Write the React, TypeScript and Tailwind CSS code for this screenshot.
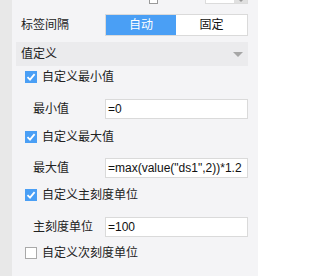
import React from 'react';

const Check: React.FC<{ checked?: boolean; label: string }> = ({ checked, label }) => (
  <div className="flex h-[22px] items-center pl-[13px]">
    {checked ? (
      <div className="flex h-[12px] w-[12px] items-center justify-center bg-[#4a9ff5]">
        <svg width="10" height="10" viewBox="0 0 10 10">
          <path d="M1.5 5.2 L4 7.6 L8.6 2.2" fill="none" stroke="#fff" strokeWidth="1.8" />
        </svg>
      </div>
    ) : (
      <div className="h-[12px] w-[12px] border border-[#a9a9a9] bg-white" />
    )}
    <span className="ml-[5px] text-[12px] leading-none text-[#222]">{label}</span>
  </div>
);

const Field: React.FC<{ label: string; value: string; className?: string }> = ({ label, value, className }) => (
  <div className={`flex h-[20px] items-center ${className ?? ''}`}>
    <span className="w-[93px] shrink-0 pl-[21px] text-[12px] text-[#222] whitespace-nowrap">{label}</span>
    <div className="flex h-[20px] w-[143px] items-center overflow-hidden border border-[#dadada] bg-white pl-[2px] text-[12px] text-[#111] whitespace-nowrap">
      {value}
    </div>
  </div>
);

export default function App() {
  return (
    <div
      className="flex h-[276px] w-[258px] overflow-hidden bg-[#f4f4f6]"
      style={{ fontFamily: '"Liberation Sans", "Noto Sans CJK SC", sans-serif' }}
    >
      <div className="w-[12px] shrink-0 bg-[#e8e8e8]" />
      <div className="flex w-[246px] flex-col">
        {/* clipped row from above */}
        <div className="flex h-[4px] items-end overflow-hidden">
          <div className="ml-[137px] h-[10px] w-[9px] border border-[#9a9a9a] bg-white" />
          <div className="ml-[47px] flex h-[12px] w-[43px] border border-[#dcdcdc] bg-white">
            <div className="ml-auto flex w-[13px] items-end justify-center bg-[#e0e0e0] pb-[1px]">
              <div className="h-0 w-0 border-x-[3px] border-t-[3px] border-x-transparent border-t-[#9a9a9a]" />
            </div>
          </div>
        </div>

        {/* 标签间隔 */}
        <div className="mt-[10px] flex h-[22px] items-center">
          <span className="w-[93px] pl-[9px] text-[12px] text-[#222]">标签间隔</span>
          <div className="flex h-[22px] w-[143px] border border-[#dadada] bg-white text-[12px]">
            <div className="flex w-[70px] items-center justify-center bg-[#4a9ff5] text-white">自动</div>
            <div className="flex flex-1 items-center justify-center text-[#111]">固定</div>
          </div>
        </div>

        {/* 值定义 */}
        <div className="ml-[4px] mt-[6px] flex h-[24px] w-[232px] items-center justify-between bg-[#ebebed] pl-[5px] pr-[5px]">
          <span className="text-[12px] text-[#222]">值定义</span>
          <div className="h-0 w-0 border-x-[5px] border-t-[5px] border-x-transparent border-t-[#a6a6a6]" />
        </div>

        <Check checked label="自定义最小值" />
        <Field className="mt-[11px]" label="最小值" value="=0" />
        <div className="mt-[7px]">
          <Check checked label="自定义最大值" />
        </div>
        <Field className="mt-[10px]" label="最大值" value={'=max(value("ds1",2))*1.2'} />
        <div className="mt-[6px]">
          <Check checked label="自定义主刻度单位" />
        </div>
        <Field className="mt-[11px]" label="主刻度单位" value="=100" />
        <div className="mt-[5px]">
          <Check label="自定义次刻度单位" />
        </div>
      </div>
    </div>
  );
}
